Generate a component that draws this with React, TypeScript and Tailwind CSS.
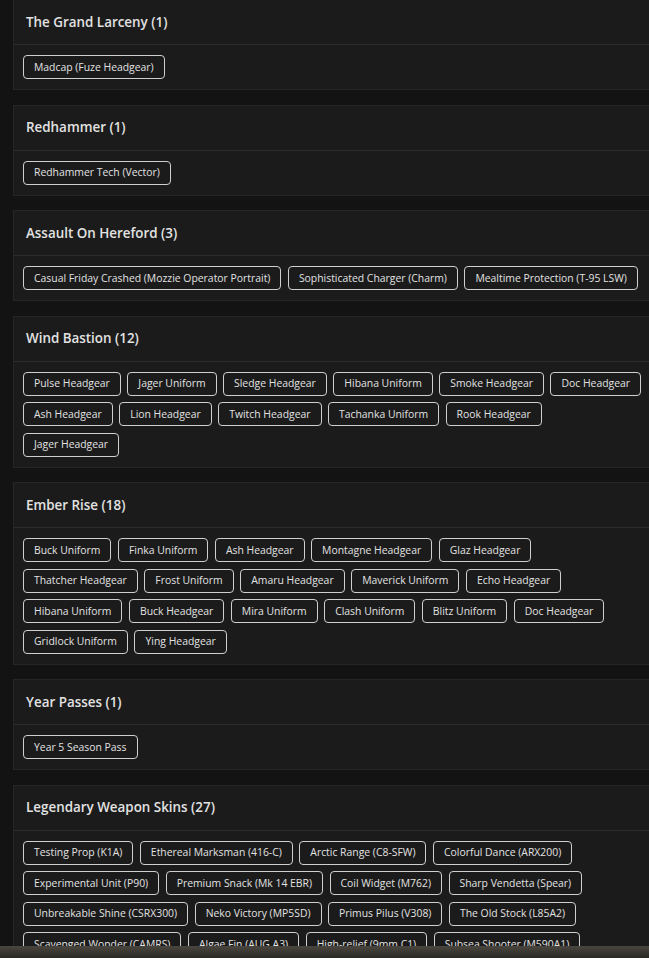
const SECTIONS: { title: string; count: number; items: string[] }[] = [
  { title: "The Grand Larceny", count: 1, items: ["Madcap (Fuze Headgear)"] },
  { title: "Redhammer", count: 1, items: ["Redhammer Tech (Vector)"] },
  {
    title: "Assault On Hereford",
    count: 3,
    items: [
      "Casual Friday Crashed (Mozzie Operator Portrait)",
      "Sophisticated Charger (Charm)",
      "Mealtime Protection (T-95 LSW)",
    ],
  },
  {
    title: "Wind Bastion",
    count: 12,
    items: [
      "Pulse Headgear",
      "Jager Uniform",
      "Sledge Headgear",
      "Hibana Uniform",
      "Smoke Headgear",
      "Doc Headgear",
      "Ash Headgear",
      "Lion Headgear",
      "Twitch Headgear",
      "Tachanka Uniform",
      "Rook Headgear",
      "Jager Headgear",
    ],
  },
  {
    title: "Ember Rise",
    count: 18,
    items: [
      "Buck Uniform",
      "Finka Uniform",
      "Ash Headgear",
      "Montagne Headgear",
      "Glaz Headgear",
      "Thatcher Headgear",
      "Frost Uniform",
      "Amaru Headgear",
      "Maverick Uniform",
      "Echo Headgear",
      "Hibana Uniform",
      "Buck Headgear",
      "Mira Uniform",
      "Clash Uniform",
      "Blitz Uniform",
      "Doc Headgear",
      "Gridlock Uniform",
      "Ying Headgear",
    ],
  },
  { title: "Year Passes", count: 1, items: ["Year 5 Season Pass"] },
  {
    title: "Legendary Weapon Skins",
    count: 27,
    items: [
      "Testing Prop (K1A)",
      "Ethereal Marksman (416-C)",
      "Arctic Range (C8-SFW)",
      "Colorful Dance (ARX200)",
      "Experimental Unit (P90)",
      "Premium Snack (Mk 14 EBR)",
      "Coil Widget (M762)",
      "Sharp Vendetta (Spear)",
      "Unbreakable Shine (CSRX300)",
      "Neko Victory (MP5SD)",
      "Primus Pilus (V308)",
      "The Old Stock (L85A2)",
      "Scavenged Wonder (CAMRS)",
      "Algae Fin (AUG A3)",
      "High-relief (9mm C1)",
      "Subsea Shooter (M590A1)",
    ],
  },
];

function Section({ title, count, items }: { title: string; count: number; items: string[] }) {
  return (
    <div className="w-[640px] shrink-0 border border-[#262626] bg-[#1b1b1b]">
      <div className="flex h-[45px] items-center border-b border-[#2c2c2c] px-3">
        <h2 className="text-[13.4px] font-semibold text-[#e2e2e2]">
          {title} ({count})
        </h2>
      </div>
      <div className="flex flex-wrap gap-x-[6.5px] gap-y-[6.5px] px-[9px] py-[10px]">
        {items.map((item, i) => (
          <span
            key={i}
            className="flex h-[24px] items-center rounded-[4px] border border-[#cfcfcf] px-[10px] text-[10.4px] leading-none text-[#e2e2e2]"
          >
            {item}
          </span>
        ))}
      </div>
    </div>
  );
}

export default function App() {
  return (
    <div
      className="relative h-[958px] overflow-hidden bg-[#131313] pl-[13px]"
      style={{ fontFamily: "'Open Sans', 'Noto Sans', sans-serif" }}
    >
      <div className="-mt-px flex flex-col gap-[14.5px]">
        {SECTIONS.map((s) => (
          <Section key={s.title} {...s} />
        ))}
      </div>
      <div className="fixed inset-x-0 bottom-0 h-[12px] bg-gradient-to-b from-[#4a463f] to-[#2b2925]" />
    </div>
  );
}
